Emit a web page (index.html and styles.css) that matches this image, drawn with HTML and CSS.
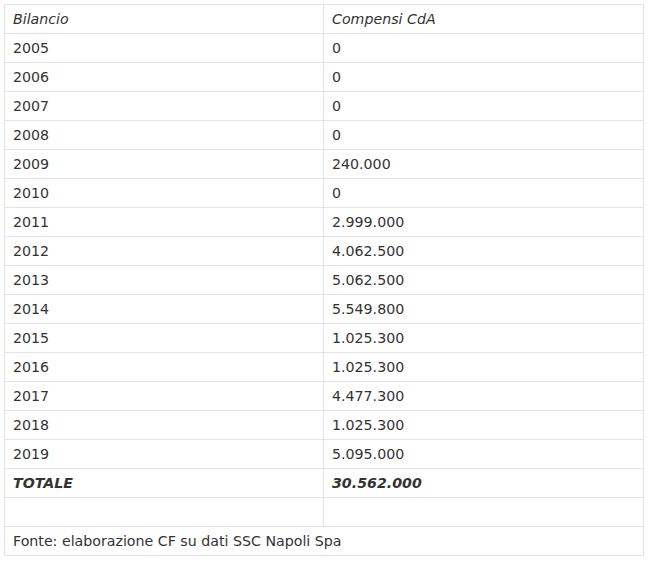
FILE: index.html
```html
<!DOCTYPE html>
<html>
<head>
<meta charset="utf-8">
<link rel="stylesheet" href="styles.css">
</head>
<body>
<table class="data">
<tbody>
<tr><td class="head">Bilancio</td><td class="head">Compensi CdA</td></tr>
<tr><td>2005</td><td>0</td></tr>
<tr><td>2006</td><td>0</td></tr>
<tr><td>2007</td><td>0</td></tr>
<tr><td>2008</td><td>0</td></tr>
<tr><td>2009</td><td>240.000</td></tr>
<tr><td>2010</td><td>0</td></tr>
<tr><td>2011</td><td>2.999.000</td></tr>
<tr><td>2012</td><td>4.062.500</td></tr>
<tr><td>2013</td><td>5.062.500</td></tr>
<tr><td>2014</td><td>5.549.800</td></tr>
<tr><td>2015</td><td>1.025.300</td></tr>
<tr><td>2016</td><td>1.025.300</td></tr>
<tr><td>2017</td><td>4.477.300</td></tr>
<tr><td>2018</td><td>1.025.300</td></tr>
<tr><td>2019</td><td>5.095.000</td></tr>
<tr><td class="total">TOTALE</td><td class="total">30.562.000</td></tr>
<tr><td></td><td></td></tr>
<tr><td colspan="2">Fonte: elaborazione CF su dati SSC Napoli Spa</td></tr>
</tbody>
</table>
</body>
</html>
```
FILE: styles.css
```css
html, body {
  margin: 0;
  padding: 0;
  background: #fff;
}
body {
  padding: 4px;
  font-family: "DejaVu Sans", Verdana, sans-serif;
  font-size: 14.2px;
  color: #333;
}
.data {
  border-collapse: collapse;
  width: 640px;
  table-layout: fixed;
}
.data td {
  border: 1px solid #e3e3e3;
  height: 29px;
  padding: 0 8px;
  box-sizing: border-box;
  vertical-align: middle;
  line-height: 17px;
}
.data td:first-child {
  width: 319px;
}
.data .head {
  font-style: italic;
}
.data .total {
  font-style: italic;
  font-weight: bold;
}
```
